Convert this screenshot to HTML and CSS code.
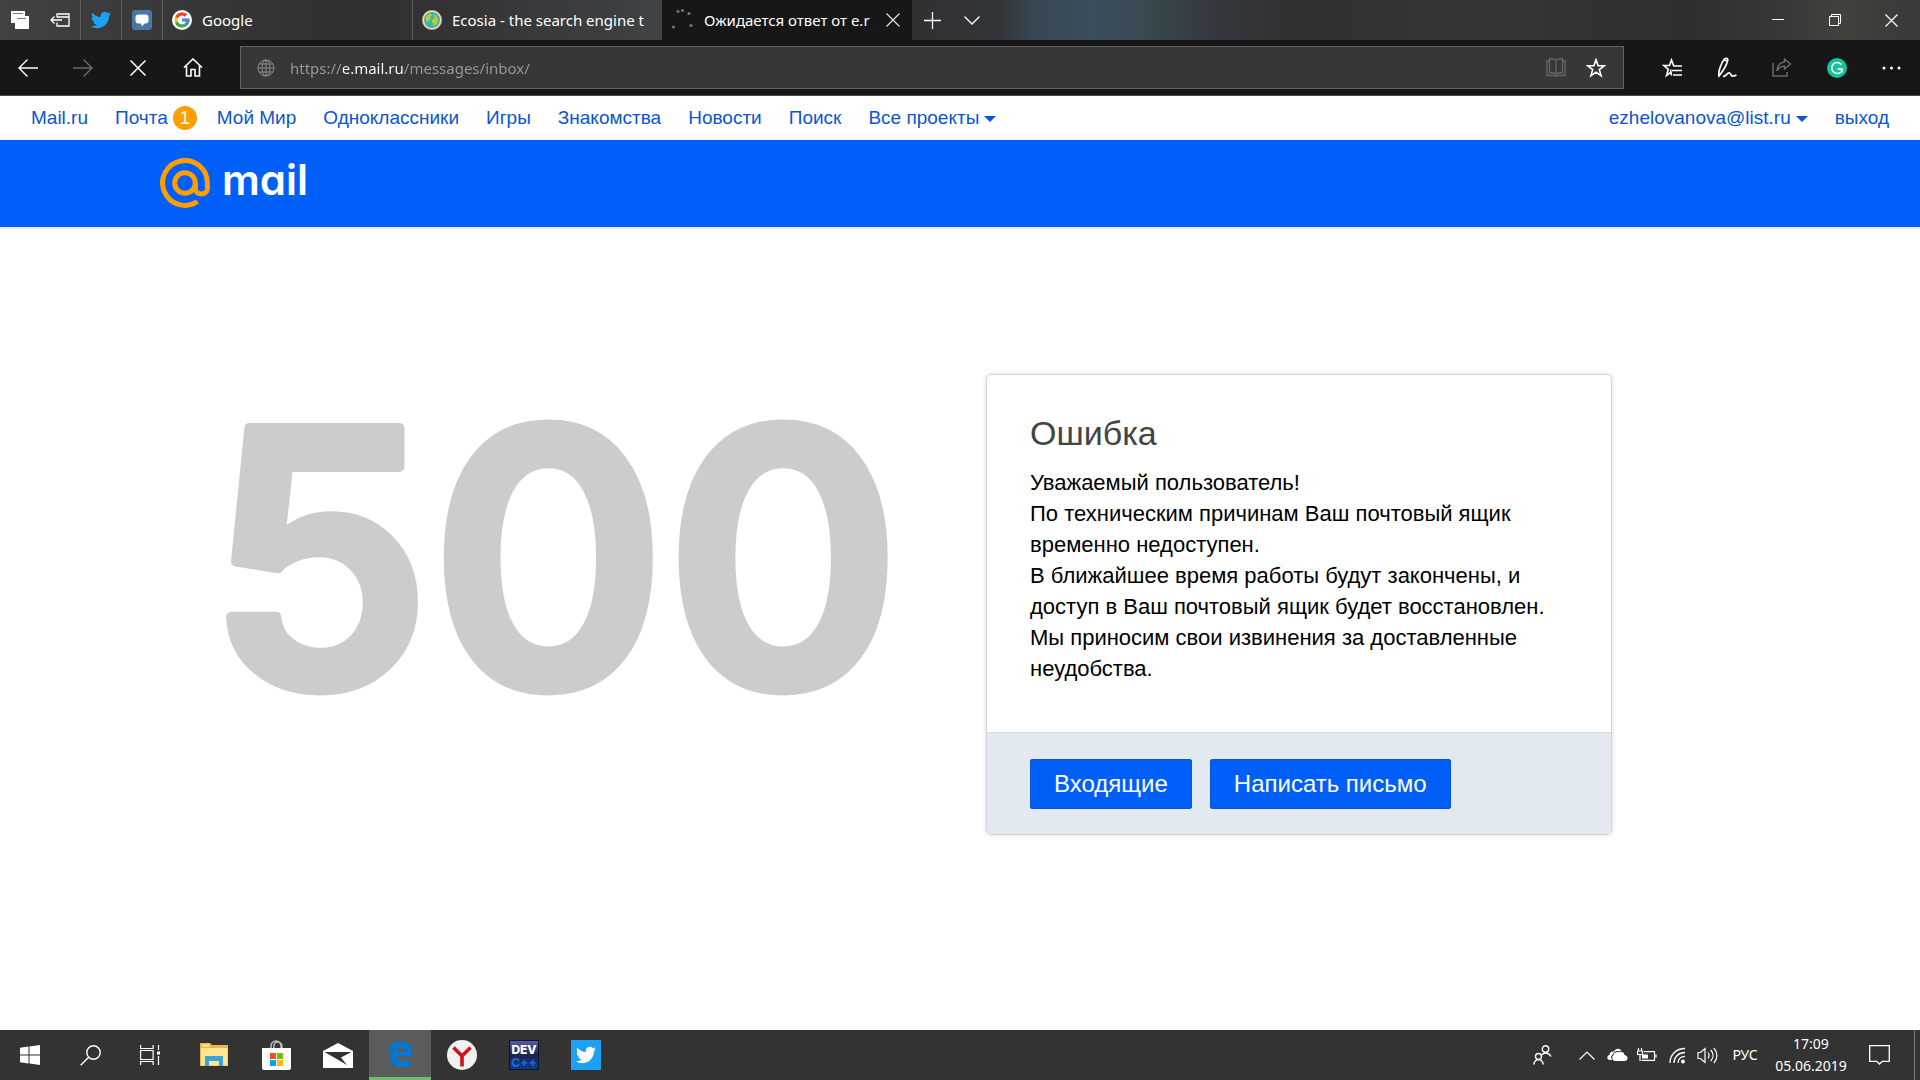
FILE: index.html
```html
<!DOCTYPE html>
<html lang="ru">
<head>
<meta charset="utf-8">
<title>Ошибка</title>
<link rel="stylesheet" href="styles.css">
</head>
<body>
<header class="tabstrip">
  <button class="strip-btn" aria-label="Tabs"><svg width="20" height="20" viewBox="0 0 20 20"><path fill="#fff" d="M1 1h14v5H6v7H1z"/><path fill="#fff" d="M5 6h14v13H5z"/><path d="M3 3.500h10M7 8.500h9" stroke="#777"/></svg></button>
  <button class="strip-btn" aria-label="Set aside"><svg width="20" height="20" viewBox="0 0 20 20" fill="none" stroke="#fff" stroke-width="1.300"><path d="M7 7.500V4h12v12H7v-3.500M7 7h12M1 10h11M4.500 6.500L1 10l3.500 3.500"/></svg></button>
  <button class="pin" aria-label="Twitter"><svg width="20" height="20" viewBox="0 0 24 24"><path fill="#1da1f2" d="M23.953 4.570a10 10 0 01-2.825.775 4.958 4.958 0 002.163-2.723c-.951.555-2.005.959-3.127 1.184a4.920 4.920 0 00-8.384 4.482C7.690 8.095 4.067 6.130 1.640 3.162a4.822 4.822 0 00-.666 2.475c0 1.710.870 3.213 2.188 4.096a4.904 4.904 0 01-2.228-.616v.060a4.923 4.923 0 003.946 4.827 4.996 4.996 0 01-2.212.085 4.936 4.936 0 004.604 3.417 9.867 9.867 0 01-6.102 2.105c-.390 0-.779-.023-1.170-.067a13.995 13.995 0 007.557 2.209c9.053 0 13.998-7.496 13.998-13.985 0-.210 0-.420-.015-.630A9.935 9.935 0 0024 4.590z"/></svg></button>
  <button class="pin" aria-label="Messages"><svg width="20" height="20" viewBox="0 0 20 20"><rect width="20" height="20" rx="3" fill="#4a76a8"/><path fill="#fff" d="M6.500 4.500h7a3 3 0 013 3v3a3 3 0 01-3 3h-1L10 16.500l-1-3H6.500a3 3 0 01-3-3v-3a3 3 0 013-3z"/></svg></button>
  <button class="tab"><svg width="20" height="20" viewBox="0 0 48 48"><circle cx="24" cy="24" r="24" fill="#fff"/><g transform="translate(2.400 2.400) scale(.9)"><path fill="#fbbc05" d="M43.600 20.100H42V20H24v8h11.300c-1.600 4.700-6.100 8-11.300 8-6.600 0-12-5.400-12-12s5.400-12 12-12c3.100 0 5.800 1.200 8 3l5.700-5.700C34 6.100 29.300 4 24 4 13 4 4 13 4 24s9 20 20 20 20-9 20-20c0-1.300-.100-2.700-.400-3.900z"/><path fill="#ea4335" d="M6.300 14.700l6.600 4.800C14.700 15.100 19 12 24 12c3.100 0 5.800 1.200 8 3l5.700-5.700C34 6.100 29.300 4 24 4 16.300 4 9.700 8.300 6.300 14.700z"/><path fill="#34a853" d="M24 44c5.200 0 9.900-2 13.400-5.200l-6.200-5.200C29.200 35.100 26.700 36 24 36c-5.200 0-9.600-3.300-11.300-8l-6.500 5C9.500 39.600 16.200 44 24 44z"/><path fill="#4285f4" d="M43.600 20.100H42V20H24v8h11.300c-.800 2.200-2.200 4.200-4.100 5.600l6.200 5.200C37 39.200 44 34 44 24c0-1.300-.100-2.700-.400-3.900z"/></g></svg><span class="tab-title">Google</span></button>
  <button class="tab"><svg width="20" height="20" viewBox="0 0 20 20"><circle cx="10" cy="10" r="9" fill="#35b3b5" stroke="#f3e2c0" stroke-width="2"/><circle cx="10" cy="10" r="9.700" fill="none" stroke="#d1603d" stroke-width=".6"/><path fill="#b8cf2a" d="M4 7c1-2 3-3.500 5-3.300l1 1.800-2 1.200 1 2-2 1.500-1.500 2C4 11 3.500 9 4 7zM11 4.500l3 1 2 3.500-.5 4-2.500 2.500-1.500 1-.5-3-1.500-2 1-2.500 2-1z"/></svg><span class="tab-title">Ecosia - the search engine t</span></button>
  <button class="tab tab-active"><svg width="22" height="22" viewBox="0 0 22 22" fill="#777"><circle cx="6" cy="2.500" r="1.500"/><circle cx="10.500" cy="1.500" r="1.500"/><circle cx="17" cy="4.500" r="1.500"/><circle cx="1.500" cy="18" r="1.500"/><circle cx="19" cy="16.500" r="1.500"/></svg><span class="tab-title">Ожидается ответ от e.r</span><svg width="14" height="14" viewBox="0 0 14 14"><path d="M.5.500l13 13M13.500.500l-13 13" stroke="#ddd" stroke-width="1.300"/></svg></button>
  <button class="strip-btn" aria-label="New tab"><svg width="17" height="17" viewBox="0 0 17 17"><path d="M0 8.500h17M8.500 0v17" stroke="#fff" stroke-width="1.300"/></svg></button>
  <button class="strip-btn" aria-label="Tab previews"><svg width="16" height="9" viewBox="0 0 16 9"><path d="M.5.500L8 8l7.500-7.500" stroke="#fff" stroke-width="1.300" fill="none"/></svg></button>
  <div class="win-controls">
    <button class="win-btn" aria-label="Minimize"><svg width="12" height="12" viewBox="0 0 12 12"><path d="M0 5.500h12" stroke="#fff"/></svg></button>
    <button class="win-btn" aria-label="Restore"><svg width="12" height="12" viewBox="0 0 12 12" fill="none" stroke="#fff"><path d="M.5 2.500h9v9h-9zM2.500 2.500v-2h9v9h-2"/></svg></button>
    <button class="win-btn" aria-label="Close"><svg width="13" height="13" viewBox="0 0 13 13"><path d="M.5.500l12 12M12.500.500l-12 12" stroke="#fff" stroke-width="1.200"/></svg></button>
  </div>
</header>

<div class="toolbar">
  <button class="tool" aria-label="Back"><svg width="20" height="18" viewBox="0 0 20 18" fill="none" stroke="#fff" stroke-width="1.400"><path d="M20 9H1M9.500.500L1 9l8.500 8.500"/></svg></button>
  <button class="tool" aria-label="Forward"><svg width="20" height="18" viewBox="0 0 20 18" fill="none" stroke="#6a6a6a" stroke-width="1.400"><path d="M0 9h19M10.500.500L19 9l-8.500 8.500"/></svg></button>
  <button class="tool" aria-label="Stop"><svg width="16" height="16" viewBox="0 0 16 16"><path d="M.5.500l15 15M15.500.500l-15 15" stroke="#fff" stroke-width="1.500"/></svg></button>
  <button class="tool" aria-label="Home"><svg width="20" height="19" viewBox="0 0 20 19" fill="none" stroke="#fff" stroke-width="1.600"><path d="M1 9.500L10 1l9 8.500M3.500 8v10H8v-6.500h4V18h4.500V8"/></svg></button>
  <div class="address">
    <svg class="globe" width="18" height="18" viewBox="0 0 18 18" fill="none" stroke="#8c8c8c"><circle cx="9" cy="9" r="8"/><ellipse cx="9" cy="9" rx="4" ry="8"/><path d="M9 1v16M1 9h16M2 5h14M2 13h14"/></svg>
    <input class="url" type="text" aria-label="Address" value="https://e.mail.ru/messages/inbox/">
    <button class="address-btn" aria-label="Reading view"><svg width="20" height="19" viewBox="0 0 20 19" fill="none" stroke="#666" stroke-width="1.300"><path d="M3.500 1h4.500l2 1.500L12 1h4.500v14H12l-2 1.500L8 15H3.500zM10 2.500v14M3.500 3H1v14.500h7l2 .8 2-.8h7V3h-2.500"/></svg></button>
    <button class="address-btn" aria-label="Add to favorites"><svg width="20" height="20" viewBox="0 0 20 20" fill="none" stroke="#fff" stroke-width="1.600"><path d="M10 1.800l2.100 6h6.100l-4.900 3.800 1.800 6.200L10 14.200l-5.100 3.600 1.800-6.200-4.900-3.800h6.100z"/></svg></button>
  </div>
  <button class="tool" aria-label="Favorites"><svg width="20" height="20" viewBox="0 0 20 20" fill="none" stroke="#fff" stroke-width="1.600"><path d="M12.500 7.500H11.500L9.500 2 7.500 7.500H1.800l4.500 3.800-1.800 6.200L9 14.200M8.500 11.500l1 6M11.500 8h8.500M10 12.500h10M11 17h9"/></svg></button>
  <button class="tool" aria-label="Notes"><svg width="20" height="21" viewBox="0 0 20 21" fill="none" stroke="#fff" stroke-width="1.700"><path d="M2 19c-1-4 2-13 5.500-17 1.500-1.500 4-.5 3 2C9.500 8 6 14 2 19zM6 19.500c3 0 4-4 6.500-3.500 2 .5 1 3.500 3.500 3 1.500-.2 2-.5 3.500-1M7 3l3.500 1"/></svg></button>
  <button class="tool" aria-label="Share"><svg width="20" height="19" viewBox="0 0 20 19" fill="none" stroke="#6a6a6a" stroke-width="1.500"><path d="M1 5v13h14v-4M12.500 1l6 5-6 5V8C9 8 7 9.500 5 13c.3-5 3-8.500 7.500-9z"/></svg></button>
  <button class="tool" aria-label="Grammarly"><svg width="20" height="20" viewBox="0 0 20 20"><circle cx="10" cy="10" r="10" fill="#15c39a"/><path d="M14.500 6.500A5.500 5.500 0 1014.800 13M10.500 11h4.500v3.500" fill="none" stroke="#fff" stroke-width="1.500"/></svg></button>
  <button class="tool" aria-label="More"><svg width="19" height="4" viewBox="0 0 19 4" fill="#fff"><circle cx="2" cy="2" r="1.500"/><circle cx="9.500" cy="2" r="1.500"/><circle cx="17" cy="2" r="1.500"/></svg></button>
</div>

<nav class="portal">
  <a href="#">Mail.ru</a>
  <a class="with-badge" href="#">Почта <span class="badge">1</span></a>
  <a href="#">Мой Мир</a>
  <a href="#">Одноклассники</a>
  <a href="#">Игры</a>
  <a href="#">Знакомства</a>
  <a href="#">Новости</a>
  <a href="#">Поиск</a>
  <a class="caret" href="#">Все проекты</a>
  <a class="caret account" href="#">ezhelovanova@list.ru</a>
  <a href="#">выход</a>
</nav>

<div class="brandbar">
  <a class="logo" href="#"><svg width="50" height="50" viewBox="0 0 50 50" fill="none" stroke="#ff9e00" stroke-width="5"><path d="M37.500 43.500A22.400 22.400 0 1147.400 25v5.500a6 5.500 0 01-12 0V25"/><circle cx="25" cy="25" r="10.300"/></svg><span class="logo-text">mail</span></a>
</div>

<main class="content">
  <svg class="code" width="700" height="440" viewBox="0 0 700 440"><text x="7" y="349">500</text></svg>
  <section class="card">
    <div class="card-body">
      <h1>Ошибка</h1>
      <p>Уважаемый пользователь!<br>По техническим причинам Ваш почтовый ящик временно недоступен.<br>В ближайшее время работы будут закончены, и доступ в Ваш почтовый ящик будет восстановлен.<br>Мы приносим свои извинения за доставленные неудобства.</p>
    </div>
    <div class="card-foot">
      <button class="action">Входящие</button>
      <button class="action">Написать письмо</button>
    </div>
  </section>
</main>

<footer class="taskbar">
  <button class="sys" aria-label="Start"><svg width="20" height="20" viewBox="0 0 20 20" fill="#fff"><path d="M0 2.800l8.500-1.200v8H0zM9.500 1.400L20 0v9.600H9.500zM0 10.500h8.500v8L0 17.200zM9.500 10.500H20V20L9.500 18.600z"/></svg></button>
  <button class="sys" aria-label="Search"><svg width="21" height="21" viewBox="0 0 21 21" fill="none" stroke="#fff" stroke-width="1.400"><circle cx="13.500" cy="7.500" r="6.700"/><path d="M8.700 12.300L.7 20.300"/></svg></button>
  <button class="sys" aria-label="Task view"><svg width="20" height="20" viewBox="0 0 20 20" fill="none" stroke="#fff" stroke-width="1.200"><path d="M.6 0v3.500h12.500V0M.6 20v-3.500h12.500V20M.6 5.500h12.500v9H.6zM18.500 0v5M18.500 11v9"/><path fill="#fff" stroke="none" d="M17 6.500h3v3h-3z"/></svg></button>
  <div class="apps">
    <button class="app" aria-label="Explorer"><svg width="28" height="26" viewBox="0 0 28 26"><path fill="#e9b94e" d="M0 1h10l2 2h16v21H0z"/><path fill="#ffe594" d="M1 6h26.500v17.500H1zM2 2.500h7.500v2H2z"/><path fill="#37a6d6" d="M5 14h18v10h-4v-5H9v5H5z"/></svg></button>
    <button class="app" aria-label="Store"><svg width="30" height="30" viewBox="0 0 30 30"><path d="M10 8V6a5 5 0 0110 0v2M13 8V6a4 4 0 018 0v2" fill="none" stroke="#bbb" stroke-width="1.500"/><path fill="#fff" d="M1 8h29v20a2 2 0 01-2 2H3a2 2 0 01-2-2z"/><path fill="#f25022" d="M9 13h6v6H9z"/><path fill="#7fba00" d="M16 13h6v6h-6z"/><path fill="#00a4ef" d="M9 20h6v6H9z"/><path fill="#ffb900" d="M16 20h6v6h-6z"/></svg></button>
    <button class="app" aria-label="Mail"><svg width="30" height="25" viewBox="0 0 30 25"><path fill="#fff" d="M0 8L15 0l15 8v17H0z"/><path fill="#333" d="M1.500 9h27L18 14.500l6 7.500-12-7z"/></svg></button>
    <button class="app app-active" aria-label="Edge"><svg width="26" height="28" viewBox="0 0 24 25"><path fill="#0078d7" fill-rule="evenodd" d="M0 11C1 4.500 5.500 1 12 1c7 0 11 4.500 11 10v3.500H8.500c.2 3.500 3 5 6.500 5 2.500 0 4.800-.6 6.800-1.700v5c-2.300 1.300-5 1.900-8 1.900C7 24.700 3 21 3 15.500 3 11.500 5 8.700 8.500 7.300 5 7.500 2 9 0 11zM8.700 10.500h8.500c0-2.800-1.500-4.300-4-4.300-2.400 0-4.200 1.800-4.500 4.300z"/></svg></button>
    <button class="app" aria-label="Yandex"><svg width="30" height="30" viewBox="0 0 30 30"><circle cx="15" cy="15" r="15" fill="#f1f1f1"/><path d="M6.500 7.500L15 16l8.500-8.500M15 15v11.500" fill="none" stroke="#d0121a" stroke-width="3.600"/></svg></button>
    <button class="app" aria-label="Dev-C++"><svg width="30" height="30" viewBox="0 0 30 30"><defs><linearGradient id="dev" x2="0" y2="1"><stop offset="0" stop-color="#5a5fa8"/><stop offset=".5" stop-color="#1c2252"/><stop offset="1" stop-color="#123a86"/></linearGradient></defs><rect x=".5" y=".5" width="29" height="29" fill="url(#dev)" stroke="#0c1433"/><text class="dev-top" x="15" y="14" text-anchor="middle">DEV</text><text class="dev-low" x="15" y="27" text-anchor="middle">C++</text></svg></button>
    <button class="app" aria-label="Twitter"><svg width="30" height="30" viewBox="0 0 36 36"><path fill="#1da1f2" d="M0 0h36v36H0z"/><path transform="translate(6 6)" fill="#fff" d="M23.953 4.570a10 10 0 01-2.825.775 4.958 4.958 0 002.163-2.723c-.951.555-2.005.959-3.127 1.184a4.920 4.920 0 00-8.384 4.482C7.690 8.095 4.067 6.130 1.640 3.162a4.822 4.822 0 00-.666 2.475c0 1.710.870 3.213 2.188 4.096a4.904 4.904 0 01-2.228-.616v.060a4.923 4.923 0 003.946 4.827 4.996 4.996 0 01-2.212.085 4.936 4.936 0 004.604 3.417 9.867 9.867 0 01-6.102 2.105c-.390 0-.779-.023-1.170-.067a13.995 13.995 0 007.557 2.209c9.053 0 13.998-7.496 13.998-13.985 0-.210 0-.420-.015-.630A9.935 9.935 0 0024 4.590z"/></svg></button>
  </div>
  <div class="tray">
    <button class="people" aria-label="People"><svg width="19" height="20" viewBox="0 0 19 20" fill="none" stroke="#fff" stroke-width="1.400"><circle cx="12.500" cy="4" r="3.200"/><circle cx="5.500" cy="11.500" r="3"/><path d="M9 10c1-2.500 6-3.500 9 1.500M.7 19.500c1.300-6.500 8.300-6.500 9.600 0"/></svg></button>
    <button class="tray-btn" aria-label="Hidden icons"><svg width="16" height="9" viewBox="0 0 16 9" fill="none" stroke="#fff" stroke-width="1.200"><path d="M.5 8.500L8 1l7.500 7.500"/></svg></button>
    <button class="tray-btn" aria-label="OneDrive"><svg width="21" height="14" viewBox="0 0 21 14" fill="#fff"><path d="M7.500 13a3.500 3.500 0 01-1-6C7.500 4 10 3.500 12 4.500 13 3 17 3.500 17.500 7c4 .5 4 6 0 6z"/><path d="M5 12H3C-.5 12-.5 7.500 2.500 7 2.500 4 5.500 3 7 3.500 8.500 0 13 0 14.500 2.800c-1 0-2 .3-2.500.7C9.500 2.500 7 3.500 6 6.300 4 7 3.500 10 5 12z"/></svg></button>
    <button class="tray-btn" aria-label="Battery"><svg width="20" height="15" viewBox="0 0 20 15" fill="none" stroke="#fff" stroke-width="1.200"><path d="M7 3.600h10.500v8.800H4.500M19 6.500v3M1.500 0v3M4.500 0v3M.6 3h5v3.500h-5zM3 6.500v6.500"/><path fill="#fff" stroke="none" d="M5 6.500h6v4H5z"/></svg></button>
    <button class="tray-btn" aria-label="Wi-Fi"><svg width="17" height="17" viewBox="0 0 17 17" fill="none" stroke="#fff" stroke-width="1.300"><path d="M1 16C1 8 7 1.500 16 1.500M5 16c0-6 4.500-10.500 11-10.500M9 16c0-4 3-6.700 7-6.700"/><circle cx="14" cy="14.500" r="1.300" fill="#fff"/></svg></button>
    <button class="tray-btn" aria-label="Volume"><svg width="21" height="17" viewBox="0 0 21 17" fill="none" stroke="#fff" stroke-width="1.200"><path d="M1 5.500h2.500L8 1.500v14l-4.500-4H1zM11 5.500c1.500 2 1.500 4 0 6M13.800 3c3 3.500 3 7.500 0 11M16.800 1c4.200 4.500 4.200 10.500 0 15"/></svg></button>
    <span class="lang">РУС</span>
    <div class="clock"><span>17:09</span><span>05.06.2019</span></div>
    <button class="notify" aria-label="Notifications"><svg width="21" height="20" viewBox="0 0 21 20" fill="none" stroke="#fff" stroke-width="1.300"><path d="M.7.700h19.600v15.600h-7L10.500 19l-2.800-2.700h-7z"/></svg></button>
    <span class="show-desktop"></span>
  </div>
</footer>
</body>
</html>
```
FILE: styles.css
```css
* { box-sizing: border-box; }

body {
  margin: 0;
  min-height: 100vh;
  display: flex;
  flex-direction: column;
  background: #fff;
  font-family: "Liberation Sans", Arial, sans-serif;
}

button {
  padding: 0;
  border: 0;
  background: none;
  color: #fff;
  font: inherit;
  flex: none;
  display: flex;
  align-items: center;
  justify-content: center;
}

svg { flex: none; display: block; }
a { color: #0b55cf; text-decoration: none; }

/* browser chrome */
.tabstrip {
  height: 40px;
  display: flex;
  font: 15px/20px "Noto Sans", "Open Sans", sans-serif;
  background: linear-gradient(90deg, #424242 0, #3a3a3a 7%, #303032 18%, #333335 23%, #3c3f42 32%, #434649 35%, #2f3133 48%, #323539 52%, #384852 54%, #3b4e5c 57%, #38484e 60%, #34393e 63%, #303032 67%, #353536 77%, #2f2f31 88%, #383836 93%, #42413c 96%, #393938 100%);
}
.strip-btn { width: 40px; }
.pin { width: 41px; border-left: 1px solid #5e5e5e; }
.tab {
  width: 250px;
  padding: 0 12px 0 9px;
  gap: 10px;
  justify-content: flex-start;
  border-left: 1px solid #5e5e5e;
  text-align: left;
}
.tab-title { flex: 1; overflow: hidden; white-space: nowrap; }
.tab-active { background: #171717; border-color: #171717; }
.win-controls { margin-left: auto; display: flex; }
.win-btn { width: 57px; }

.toolbar {
  height: 56px;
  padding-right: 1px;
  display: flex;
  align-items: stretch;
  background: #171717;
  border-bottom: 1px solid #4a4a4a;
}
.tool { width: 55px; }
.address {
  flex: 1;
  display: flex;
  align-items: center;
  margin: 6px 20px;
  padding: 0 7px 0 16px;
  background: #373737;
  border: 1px solid #636363;
}
.globe { margin-right: 15px; }
.url {
  flex: 1;
  min-width: 0;
  padding: 0;
  border: 0;
  outline: 0;
  font: 15px/24px "Noto Sans", "Open Sans", sans-serif;
  color: transparent;
  background: linear-gradient(90deg, #9a9a9a 53px, #fff 53px, #fff 113px, #9a9a9a 113px);
  -webkit-background-clip: text;
  background-clip: text;
}
.address-btn { width: 40px; }

/* portal links */
.portal {
  height: 44px;
  padding: 0 31px;
  display: flex;
  align-items: center;
  gap: 27px;
  font-size: 19px;
  line-height: 24px;
}
.with-badge { display: flex; gap: 5px; margin-right: -7px; }
.badge {
  width: 24px;
  height: 24px;
  border-radius: 50%;
  background: #ff9e00;
  color: #fff;
  font-size: 18px;
  text-align: center;
}
.caret::after {
  content: "";
  display: inline-block;
  margin-left: 5px;
  vertical-align: 2px;
  border: 6px solid transparent;
  border-top-color: #0b55cf;
  border-bottom: 0;
}
.account { margin-left: auto; }

.brandbar {
  height: 87px;
  padding: 0 160px 2px;
  display: flex;
  align-items: center;
  background: #005ff9;
  box-shadow: 0 1px 3px rgba(0, 0, 60, .15);
}
.logo { display: flex; align-items: flex-start; gap: 12px; }
.logo-text {
  color: #fff;
  font: 600 42px/44px Inter, sans-serif;
  font-feature-settings: "cv11";
}

/* error message */
.content {
  flex: 1;
  display: grid;
  grid-template-columns: minmax(0, 1fr) 626px;
  column-gap: 80px;
  align-items: start;
  padding: 111px 308px 100px 200px;
}
.code {
  font: 600 356px Inter, sans-serif;
  fill: #ccc;
  stroke: #ccc;
  stroke-width: 10px;
  stroke-linejoin: round;
}
.card {
  margin-top: 36px;
  border: 1px solid #d4d4d4;
  border-radius: 5px;
  box-shadow: 0 0 5px rgba(0, 0, 0, .15);
  overflow: hidden;
}
.card-body { padding: 36px 43px 48px; }
.card h1 {
  margin: 0 0 12px;
  font-size: 34px;
  line-height: 44px;
  font-weight: 400;
  color: #444;
}
.card p { margin: 0; font-size: 22px; line-height: 31px; }
.card-foot {
  display: flex;
  gap: 18px;
  padding: 26px 43px 25px;
  background: #e3e9f1;
  border-top: 1px solid #d4d8de;
}
.action {
  height: 50px;
  padding: 0 24px;
  border-radius: 3px;
  background: #005ff9;
  box-shadow: inset 0 0 0 1px #0a55d4;
  font-size: 24px;
}

/* taskbar */
.taskbar {
  height: 50px;
  display: flex;
  background: #333;
  color: #fff;
  font: 15px/22px "Noto Sans", "Open Sans", sans-serif;
}
.sys { width: 60px; }
.apps { display: flex; margin-left: 3px; }
.app { width: 62px; }
.app-active { background: #5c5c5c; border-bottom: 3px solid #6abf69; }
.dev-top, .dev-low { font: 800 12px Inter, sans-serif; fill: #fff; }
.dev-low { fill: #0f6fd6; }
.tray { display: flex; align-items: center; margin-left: auto; }
.people { width: 60px; }
.tray-btn { width: 30px; }
.lang { width: 46px; text-align: center; font-size: 14px; }
.clock {
  width: 86px;
  display: flex;
  flex-direction: column;
  align-items: center;
  font-size: 14px;
}
.notify { width: 60px; padding-right: 10px; }
.show-desktop { width: 6px; height: 50px; border-left: 1px solid #777; }
```
